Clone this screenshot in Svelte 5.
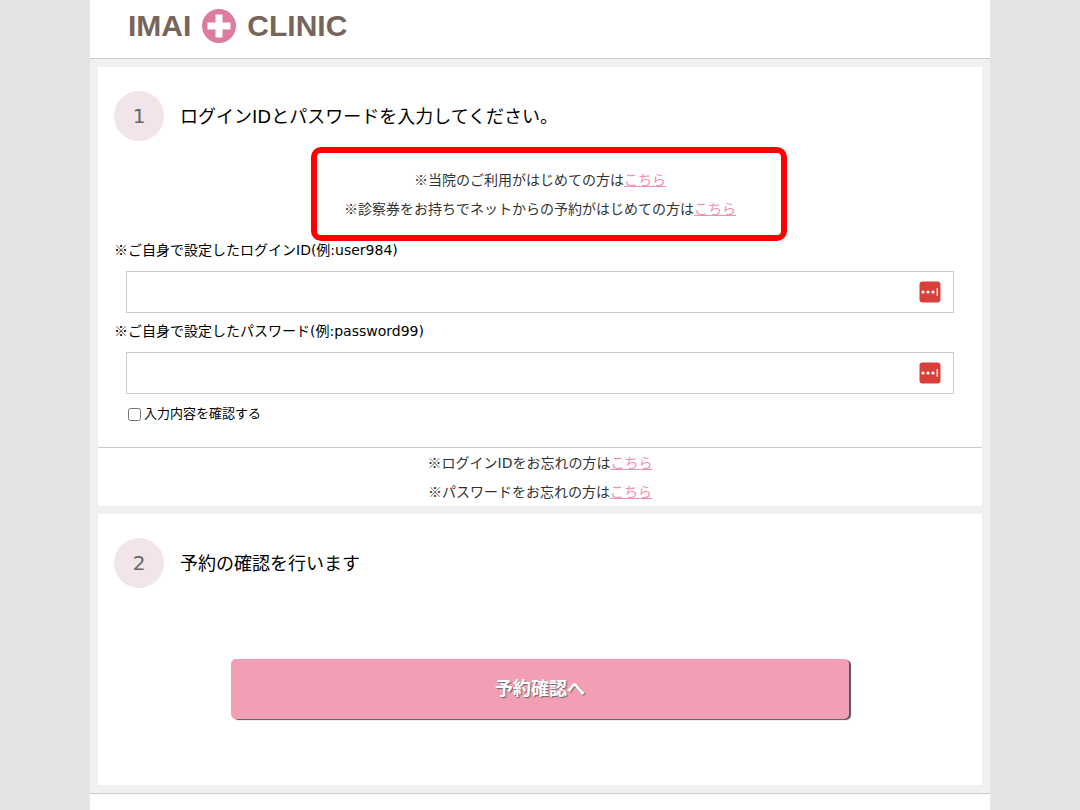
<script>
  let loginId = $state('');
  let password = $state('');
  let reveal = $state(false);
</script>

{#snippet keyBadge()}
  <svg class="badge" viewBox="0 0 22 22" aria-hidden="true">
    <rect x="0.5" y="0.5" width="21" height="21" rx="3" fill="#d9403c" />
    <circle cx="4" cy="11" r="1.6" fill="#fff" />
    <circle cx="9" cy="11" r="1.6" fill="#fff" />
    <circle cx="14" cy="11" r="1.6" fill="#fff" />
    <rect x="17.6" y="7" width="1.2" height="8" fill="#fff" />
  </svg>
{/snippet}

<div class="page" lang="ja">
  <header>
    <div class="logo">
      <span>IMAI</span>
      <svg viewBox="0 0 34 34" aria-hidden="true">
        <circle cx="17" cy="17" r="17" fill="#dc7d9d" />
        <path d="M13.5 5.5h7v8h8v7h-8v8h-7v-8h-8v-7h8z" fill="#fff" />
      </svg>
      <span>CLINIC</span>
    </div>
  </header>

  <main>
    <section class="card">
      <div class="body">
        <div class="step">
          <span class="number">1</span>
          <h2>ログインIDとパスワードを入力してください。</h2>
        </div>

        <div class="notes first">
          <p><span class="jp">※</span>当院のご利用がはじめての方は<a href="#first">こちら</a></p>
          <p><span class="jp">※</span>診察券をお持ちでネットからの予約がはじめての方は<a href="#net">こちら</a></p>
          <div class="callout"></div>
        </div>

        <label class="caption" for="login-id"><span class="jp">※</span>ご自身で設定したログインID(例:user984)</label>
        <div class="field">
          <input id="login-id" type="text" bind:value={loginId} />
          {@render keyBadge()}
        </div>

        <label class="caption" for="password"><span class="jp">※</span>ご自身で設定したパスワード(例:password99)</label>
        <div class="field">
          <input id="password" type={reveal ? 'text' : 'password'} bind:value={password} />
          {@render keyBadge()}
        </div>

        <label class="reveal">
          <input type="checkbox" bind:checked={reveal} />入力内容を確認する
        </label>
      </div>

      <div class="notes forgot">
        <p><span class="jp">※</span>ログインIDをお忘れの方は<a href="#id">こちら</a></p>
        <p><span class="jp">※</span>パスワードをお忘れの方は<a href="#pass">こちら</a></p>
      </div>
    </section>

    <section class="card">
      <div class="body">
        <div class="step">
          <span class="number">2</span>
          <h2>予約の確認を行います</h2>
        </div>
      </div>
      <div class="action">
        <button type="button">予約確認へ</button>
      </div>
    </section>
  </main>

  <footer></footer>
</div>

<style>
  :global(body) {
    margin: 0;
    background: #e4e4e4;
  }

  .page {
    display: flex;
    flex-direction: column;
    max-width: 900px;
    min-height: 100vh;
    margin: 0 auto;
    background: #f0f0f0;
    color: #000;
    font-family: 'DejaVu Sans', 'Noto Sans CJK JP', sans-serif;
    font-size: 14px;
  }

  .jp {
    font-family: 'Noto Sans CJK JP', sans-serif;
  }

  header {
    padding: 8px 38px 15px;
    background: #fff;
    border-bottom: 1px solid #ccc;
  }

  .logo {
    display: flex;
    align-items: center;
    gap: 11px;
    color: #76655a;
    font: bold 30px/35px 'Liberation Sans', sans-serif;
  }

  .logo svg {
    width: 34px;
    height: 34px;
  }

  main {
    display: flex;
    flex-direction: column;
    gap: 8px;
    padding: 8px;
  }

  .card {
    background: #fff;
  }

  .body {
    padding: 24px 16px;
  }

  .step {
    display: flex;
    align-items: center;
    gap: 16px;
  }

  .number {
    display: flex;
    flex: none;
    align-items: center;
    justify-content: center;
    width: 50px;
    height: 50px;
    border-radius: 50%;
    background: #f2e4eb;
    color: #666;
    font-size: 20px;
    line-height: 24px;
  }

  h2 {
    margin: 0;
    padding-bottom: 2px;
    font-size: 18px;
    font-weight: normal;
  }

  .notes {
    color: #333;
    line-height: 28px;
    text-align: center;
  }

  .notes p {
    margin: 0;
  }

  .notes a {
    color: #f48fb1;
  }

  .first {
    position: relative;
    width: fit-content;
    margin: 24px auto 13px;
  }

  .callout {
    position: absolute;
    inset: -18px -51px -18px -33px;
    border: 6px solid #f00;
    border-radius: 10px;
    pointer-events: none;
  }

  .caption {
    display: block;
    padding: 4px 0 7px;
    line-height: 27px;
  }

  .notes + .caption {
    padding-top: 0;
  }

  .field {
    position: relative;
    margin: 0 12px;
  }

  .field input {
    display: block;
    box-sizing: border-box;
    width: 100%;
    height: 42px;
    padding: 0 40px 0 10px;
    border: 1px solid #ccc;
    border-radius: 0;
    background: #fff;
    font: inherit;
  }

  .badge {
    position: absolute;
    top: 10px;
    right: 13px;
    width: 22px;
    height: 22px;
  }

  .reveal {
    display: flex;
    align-items: center;
    gap: 3px;
    width: fit-content;
    margin: 11px 14px 0;
    font-size: 13px;
    line-height: 18px;
  }

  .reveal input {
    width: 13px;
    height: 13px;
    margin: 0;
  }

  .forgot {
    border-top: 1px solid #ccc;
  }

  .action {
    display: flex;
    justify-content: center;
    padding: 47px 0 66px;
  }

  button {
    width: 70%;
    height: 60px;
    padding: 0 0 4px;
    border: 0;
    border-radius: 5px;
    background: #f29fb5;
    box-shadow: 2px 1px 1px #555;
    color: #fff;
    font: bold 18px 'Noto Sans CJK JP', sans-serif;
    text-shadow: 1px 1px 1px #666;
  }

  footer {
    flex: 1;
    border-top: 1px solid #ccc;
    background: #fff;
  }
</style>
